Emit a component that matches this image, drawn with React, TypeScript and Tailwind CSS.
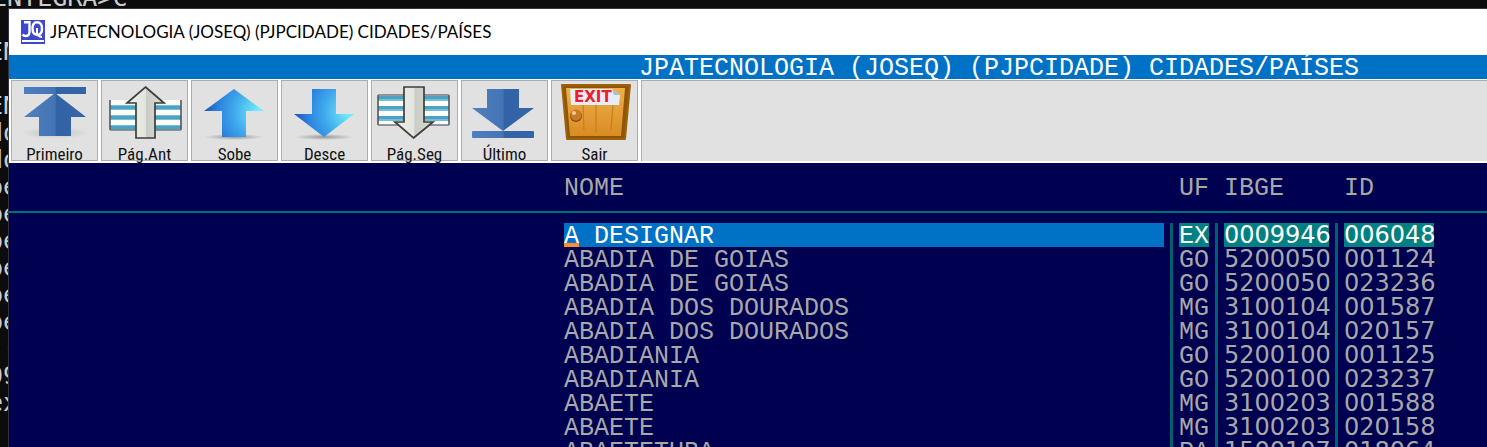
import type { ReactNode } from "react";

const BACKDROP_LINES = ["EN", "", "EN", "do", "do", "pe", "pe", "pe", "pe", "pe", "pe", " (", "09", "ex"];

const ROWS = [
  ["A DESIGNAR", "EX", "0009946", "006048"],
  ["ABADIA DE GOIAS", "GO", "5200050", "001124"],
  ["ABADIA DE GOIAS", "GO", "5200050", "023236"],
  ["ABADIA DOS DOURADOS", "MG", "3100104", "001587"],
  ["ABADIA DOS DOURADOS", "MG", "3100104", "020157"],
  ["ABADIANIA", "GO", "5200100", "001125"],
  ["ABADIANIA", "GO", "5200100", "023237"],
  ["ABAETE", "MG", "3100203", "001588"],
  ["ABAETE", "MG", "3100203", "020158"],
  ["ABAETETUBA", "PA", "1500107", "018064"],
];

function Gradients() {
  return (
    <svg className="absolute size-0" aria-hidden="true">
      <defs>
        <linearGradient id="steel" x1="0" x2="1" y1="0" y2="0">
          <stop offset="0" stopColor="#4f80bd" />
          <stop offset="0.5" stopColor="#4474b4" />
          <stop offset="0.52" stopColor="#3263a5" />
          <stop offset="1" stopColor="#3565a8" />
        </linearGradient>
        <radialGradient id="sky" gradientUnits="userSpaceOnUse" cx="68" cy="31" r="58">
          <stop offset="0" stopColor="#76f4fb" />
          <stop offset="0.45" stopColor="#3fa9ec" />
          <stop offset="0.75" stopColor="#2a7fdc" />
          <stop offset="1" stopColor="#1d4cad" />
        </radialGradient>
        <linearGradient id="silver" x1="0" x2="1" y1="0" y2="0">
          <stop offset="0" stopColor="#eef0ea" />
          <stop offset="0.5" stopColor="#e2e5de" />
          <stop offset="0.52" stopColor="#c9cdc6" />
          <stop offset="1" stopColor="#d8dbd4" />
        </linearGradient>
        <linearGradient id="wood" x1="0" x2="0" y1="0" y2="1">
          <stop offset="0" stopColor="#eeb04c" />
          <stop offset="1" stopColor="#d98c22" />
        </linearGradient>
        <radialGradient id="shade">
          <stop offset="0" stopColor="#777" stopOpacity="0.7" />
          <stop offset="1" stopColor="#777" stopOpacity="0" />
        </radialGradient>
      </defs>
    </svg>
  );
}

function Stripes({ x, y, flip }: { x: number; y: number; flip?: boolean }) {
  const offsets = flip ? [1, 11, 21] : [5, 15, 25];
  return (
    <g>
      <rect x={x} y={y} width="71" height="30" fill="#fcfcf8" />
      {offsets.map((o) => (
        <g key={o}>
          <rect x={x} y={y + o} width="71" height="5" fill="#79bcd4" />
          <rect x={x} y={y + o + (flip ? 0 : 1)} width="71" height="3" fill="#4ba3c3" />
        </g>
      ))}
      <path d={`M${x} ${y}v30M${x + 71} ${y}v30`} stroke="#50585c" strokeWidth="1.6" />
      <path d={flip ? `M${x} ${y}h71M${x} ${y + 30}h71` : `M${x} ${y + 30}h71`} stroke="#70797c" strokeWidth="1.3" />
    </g>
  );
}

const TOOLS: { label: string; art: ReactNode }[] = [
  {
    label: "Primeiro",
    art: (
      <>
        <ellipse cx="43" cy="52" rx="34" ry="6" fill="url(#shade)" opacity="0.4" />
        <rect x="12" y="6" width="62" height="7" fill="url(#steel)" />
        <path d="M43 12 74 36H59V55H27V36H12Z" fill="url(#steel)" />
      </>
    ),
  },
  {
    label: "Pág.Ant",
    art: (
      <>
        <Stripes x={8} y={19} />
        <path d="M43.5 6 62 22H53V57H34V22H25Z" fill="url(#silver)" stroke="#3c3f3c" strokeWidth="1.7" />
      </>
    ),
  },
  {
    label: "Sobe",
    art: (
      <>
        <ellipse cx="42" cy="56" rx="30" ry="3" fill="url(#shade)" />
        <path d="M42 8 72 30H54V56H30V30H12Z" fill="url(#sky)" />
      </>
    ),
  },
  {
    label: "Desce",
    art: (
      <>
        <ellipse cx="42" cy="56" rx="30" ry="3" fill="url(#shade)" />
        <path d="M42 56 72 33H54V8H30V33H12Z" fill="url(#sky)" />
      </>
    ),
  },
  {
    label: "Pág.Seg",
    art: (
      <>
        <Stripes x={6} y={14} flip />
        <path d="M41.5 57 61 41H52V6H32V41H23Z" fill="url(#silver)" stroke="#3c3f3c" strokeWidth="1.7" />
      </>
    ),
  },
  {
    label: "Último",
    art: (
      <>
        <path d="M41 50 72 27H57V8H25V27H10Z" fill="url(#steel)" />
        <rect x="10" y="50" width="62" height="7" rx="1" fill="url(#steel)" />
      </>
    ),
  },
  {
    label: "Sair",
    art: (
      <>
        <path d="M10 4H78L73 58H15Z" fill="#8f5608" stroke="#9d620c" strokeWidth="2" strokeLinejoin="round" />
        <path d="M14 7H73L69 55H18Z" fill="url(#wood)" />
        <path d="M31 24 32 49M44 24V52M61 24 59 49" stroke="#c5801d" strokeWidth="1.2" fill="none" />
        <path d="M18 8H60L68 14 67 24H19Z" fill="#e6edf6" />
        <path d="M60 8 68 14H62Z" fill="#a8bdd3" />
        <text x="22" y="21" className="font-['DejaVu_Sans'] text-[15px] font-bold" fill="#ed1c2e">
          EXIT
        </text>
        <circle cx="24" cy="35" r="6" fill="#8d4c10" />
        <circle cx="24" cy="34" r="5.5" fill="#c97a24" />
        <circle cx="22" cy="32" r="2" fill="#f3cf96" />
      </>
    ),
  },
];

function Separator() {
  return (
    <td className="p-0" aria-hidden="true">
      <div className="mx-auto h-6 w-[3px] bg-[#006070]" />
    </td>
  );
}

export default function App() {
  return (
    <div className="grid h-screen overflow-hidden bg-[#0c0c0c]">
      <div
        aria-hidden="true"
        className="col-start-1 row-start-1 overflow-hidden font-['DejaVu_Sans_Mono','Liberation_Mono',monospace] text-[25px] leading-[27px] whitespace-pre text-[#cccccc]"
      >
        <div className="-mt-4 -ml-2">ENTEGRA&gt;C</div>
        <div className="-ml-3 pt-[27px]">
          {BACKDROP_LINES.map((line, i) => (
            <div key={i} className="h-[27px]">
              {line}
            </div>
          ))}
        </div>
      </div>

      <main className="z-10 col-start-1 row-start-1 mt-2 ml-2 flex min-h-0 flex-col overflow-hidden border-t border-l border-[#333340] bg-[#000050]">
        <Gradients />
        <header className="flex h-[46px] shrink-0 items-center gap-[5px] bg-white pl-3">
          <svg viewBox="0 0 24 24" className="size-6" aria-hidden="true">
            <rect width="24" height="24" fill="#3f48cc" />
            <path d="M3 2.2H8.5V11.5Q8.5 16 5 16Q2.6 16 1.5 14.5" fill="none" stroke="#fff" strokeWidth="2.4" />
            <path
              d="M16 2.2C12.5 2.2 11.500 5 11.5 8.5C11.5 12 13 14.8 16.5 14.8C20 14.8 21 12 21 8.5C21 5 19.5 2.2 16 2.2Z"
              fill="none"
              stroke="#fff"
              strokeWidth="2.4"
            />
            <path d="M16 8V13Q16.5 16.5 21 17" fill="none" stroke="#fff" strokeWidth="2" />
            <path d="M1 21H23" stroke="#fff" strokeWidth="2" />
          </svg>
          <span className="font-['Lato','Open_Sans',sans-serif] text-[17px] whitespace-nowrap text-black">
            JPATECNOLOGIA (JOSEQ) (PJPCIDADE) CIDADES/PAÍSES
          </span>
        </header>

        <h1 className="h-6 shrink-0 bg-[#0072c6] pr-32 text-right font-['Liberation_Mono',monospace] text-[25px] leading-7 whitespace-nowrap text-white">
          JPATECNOLOGIA (JOSEQ) (PJPCIDADE) CIDADES/PAÍSES
        </h1>

        <nav className="flex shrink-0 gap-[3px] bg-white pt-px pb-0.5 pl-0.5">
          {TOOLS.map((tool) => (
            <button
              key={tool.label}
              type="button"
              className="h-[81px] w-[87px] shrink-0 border border-[#adadad] bg-[#e1e1e1] text-center font-['Roboto_Condensed','Roboto',sans-serif] text-[17px] leading-[22px] text-[#111]"
            >
              <svg viewBox="0 0 85 62" className="block h-[62px] w-full" aria-hidden="true">
                {tool.art}
              </svg>
              <span className="block h-[17px]">{tool.label}</span>
            </button>
          ))}
          <div className="grow border-t border-l border-[#adadad] bg-[#e1e1e1]" />
        </nav>

        <table className="w-full table-fixed border-collapse font-['Liberation_Mono',monospace] text-[25px] leading-7 whitespace-nowrap text-[#a8a8a8]">
          <colgroup>
            <col />
            <col className="w-[600px]" />
            <col className="w-[15px]" />
            <col className="w-[30px]" />
            <col className="w-[15px]" />
            <col className="w-[105px]" />
            <col className="w-[15px]" />
            <col className="w-[90px]" />
            <col className="w-[53px]" />
          </colgroup>
          <thead>
            <tr className="h-[49px] border-b-2 border-[#007078] text-left">
              <td />
              <th className="px-0 pt-1 pb-0 font-normal">NOME</th>
              <td />
              <th className="px-0 pt-1 pb-0 font-normal">UF</th>
              <td />
              <th className="px-0 pt-1 pb-0 font-normal">IBGE</th>
              <td />
              <th className="px-0 pt-1 pb-0 font-normal">ID</th>
              <td />
            </tr>
            <tr className="h-[11px]" aria-hidden="true">
              <td colSpan={9} className="p-0" />
            </tr>
          </thead>
          <tbody>
            {ROWS.map(([name, uf, ibge, id], i) => (
              <tr key={id} className={i === 0 ? "h-6 text-white" : "h-6"}>
                <td className="p-0" />
                <td className={i === 0 ? "bg-[#0072c6] p-0" : "p-0"}>
                  <div className="h-6">
                    {i === 0 ? (
                      <>
                        <span className="inline-block h-6 border-b-4 border-[#ff8c38] align-top">A</span>
                        {name.slice(1)}
                      </>
                    ) : (
                      name
                    )}
                  </div>
                </td>
                <Separator />
                <td className={i === 0 ? "bg-[#008080] p-0" : "p-0"}>
                  <div className="h-6">{uf}</div>
                </td>
                <Separator />
                <td className={i === 0 ? "bg-[#008080] p-0" : "p-0"}>
                  <div className="h-6 font-['DejaVu_Sans',sans-serif] text-[24px] leading-6">{ibge}</div>
                </td>
                <Separator />
                <td className={i === 0 ? "bg-[#008080] p-0" : "p-0"}>
                  <div className="h-6 font-['DejaVu_Sans',sans-serif] text-[24px] leading-6">{id}</div>
                </td>
                <td className="p-0" />
              </tr>
            ))}
          </tbody>
        </table>
      </main>
    </div>
  );
}
